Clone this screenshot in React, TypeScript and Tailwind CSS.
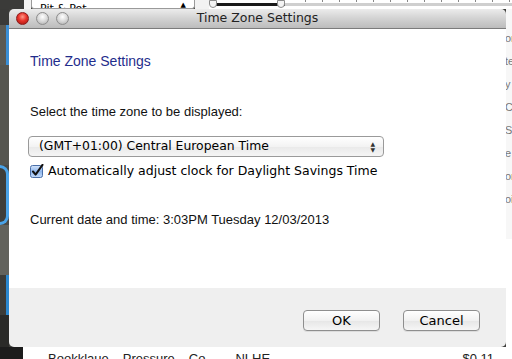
import React from 'react';

const lucida = { fontFamily: '"DejaVu Sans", "Liberation Sans", sans-serif' };
const helv = { fontFamily: '"Liberation Sans", Arial, sans-serif' };

const rightFragments = ['on', 'te', 'y', 'C', 'S', 'e', 'or', 'oi'];

const TrafficLight: React.FC<{ color: 'red' | 'grey' }> = ({ color }) => (
  <div
    className={
      color === 'red'
        ? 'w-[13px] h-[13px] rounded-full border border-[#8a1a1a] bg-[radial-gradient(circle_at_50%_35%,#ff9a8a_0%,#e8332a_45%,#a01510_100%)]'
        : 'w-[13px] h-[13px] rounded-full border border-[#8d8d8d] bg-[radial-gradient(circle_at_50%_35%,#ffffff_0%,#d9d9d9_50%,#a9a9a9_100%)]'
    }
  />
);

const CheckBox: React.FC = () => (
  <svg width="14" height="14" viewBox="0 0 14 14" className="shrink-0">
    <defs>
      <linearGradient id="cb" x1="0" y1="0" x2="0" y2="1">
        <stop offset="0" stopColor="#d6e6fb" />
        <stop offset="0.5" stopColor="#8fb6ec" />
        <stop offset="1" stopColor="#c4dcfb" />
      </linearGradient>
    </defs>
    <rect x="0.5" y="1.5" width="12" height="12" rx="2" fill="url(#cb)" stroke="#4a6fa8" />
    <path d="M3 7.5 L5.6 10.6 L12.5 0.8" fill="none" stroke="#111" strokeWidth="2" strokeLinecap="round" strokeLinejoin="round" />
  </svg>
);

const MacButton: React.FC<{ label: string }> = ({ label }) => (
  <button
    className="w-[77px] h-[21px] rounded-[4px] border border-[#8e8e8e] bg-[linear-gradient(#ffffff,#f1f1f1_50%,#e6e6e6_51%,#f6f6f6)] text-[13px] leading-none text-black shadow-[0_1px_0_rgba(0,0,0,0.08)]"
    style={lucida}
  >
    {label}
  </button>
);

export default function App() {
  return (
    <div className="w-[512px] h-[359px] overflow-hidden bg-[#3f3f3c] flex flex-col">
      {/* top strip: background app controls */}
      <div className="h-[9px] flex shrink-0">
        <div className="w-[24px] shrink-0 bg-[#3b3b39]" />
        <div className="w-[7px] shrink-0 bg-[#f2f2f2]" />
        <div
          className="w-[164px] shrink-0 h-[9px] border-x border-b border-[#9a9a9a] rounded-b-[3px] bg-white flex items-end justify-between px-[8px] text-[11px] leading-none overflow-hidden"
          style={lucida}
        >
          <span className="translate-y-[6px]">Pit &amp; Pot</span>
          <span className="text-[7px] translate-y-[1px]">▲</span>
        </div>
        <div className="w-[14px] shrink-0 bg-[#f2f2f2]" />
        <div className="flex-1 relative bg-white">
          <div className="absolute left-[2px] top-[3px] w-[74px] h-[3px] bg-[#1a1a1a]" />
          <div className="absolute left-[76px] right-0 top-[3px] h-[3px] bg-[#cfcfcf]" />
          <div className="absolute left-0 top-0 w-[8px] h-[8px] rounded-b-full border border-[#8d8d8d] bg-[#f4f4f4]" />
          <div className="absolute left-[68px] top-0 w-[8px] h-[8px] rounded-b-full border border-[#8d8d8d] bg-[#f4f4f4]" />
          <div className="absolute left-[96px] right-0 top-0 h-[2px] bg-[repeating-linear-gradient(90deg,#888_0px,#888_1px,transparent_1px,transparent_17px)]" />
        </div>
      </div>

      <div className="flex flex-1 min-h-0">
        {/* left strip */}
        <div className="w-[9px] shrink-0 flex flex-col bg-[#4a4a46]">
          <div className="h-[16px] bg-[#3a3a38]" />
          <div className="h-[40px] bg-[#5a5a54] border-r-[3px] border-[#3a8fd6]" />
          <div className="h-[100px] bg-[#55554f]" />
          <div className="h-[60px] bg-[#3e3e3a] rounded-r-full border-y-[3px] border-r-[3px] border-[#4aa3e8]" />
          <div className="h-[50px] bg-[#62625c]" />
          <div className="h-[40px] bg-[#3c3c39] border-r-[3px] border-[#2b88d0]" />
          <div className="flex-1 bg-[#2a2a28]" />
        </div>

        {/* window */}
        <div className="w-[497px] shrink-0 flex flex-col rounded-[5px] overflow-hidden">
          <div className="h-[20px] shrink-0 relative flex items-center px-[7px] gap-[7px] bg-[linear-gradient(#ececec,#d2d2d2_50%,#bcbcbc)] border-b border-[#7b7b7b]">
            <TrafficLight color="red" />
            <TrafficLight color="grey" />
            <TrafficLight color="grey" />
            <div className="absolute inset-0 flex items-center justify-center text-[12.5px] text-[#222]" style={lucida}>
              Time Zone Settings
            </div>
          </div>

          <div className="h-[259px] shrink-0 bg-white flex flex-col pl-[21px] pt-[23px]" style={helv}>
            <div className="text-[14px] leading-[18px] text-[#1f2d8c]">Time Zone Settings</div>
            <div className="mt-[34px] text-[13px] leading-[16px] text-[#111]">Select the time zone to be displayed:</div>
            <div
              className="mt-[16px] ml-[-2px] w-[356px] h-[21px] rounded-[4px] border border-[#9a9a9a] bg-[linear-gradient(#ffffff,#f3f3f3_50%,#e9e9e9_51%,#f5f5f5)] flex items-center justify-between pl-[10px] pr-[8px] text-[12.4px] text-black"
              style={lucida}
            >
              <span>(GMT+01:00) Central European Time</span>
              <span className="flex flex-col items-center text-[6px] leading-[6px] text-[#333]">
                <span>▲</span>
                <span>▼</span>
              </span>
            </div>
            <div className="mt-[6px] flex items-center gap-[4px] text-[12.5px] leading-[16px] text-black" style={lucida}>
              <CheckBox />
              <span>Automatically adjust clock for Daylight Savings Time</span>
            </div>
            <div className="mt-[33px] text-[13px] leading-[16px] text-[#111]">
              Current date and time: 3:03PM Tuesday 12/03/2013
            </div>
          </div>

          <div className="flex-1 bg-[#efefef] flex justify-end items-start pt-[22px] pr-[26px] gap-[23px]">
            <MacButton label="OK" />
            <MacButton label="Cancel" />
          </div>
        </div>

        {/* right strip */}
        <div className="flex-1 min-w-0 overflow-hidden flex flex-col bg-white">
          <div className="h-[230px] bg-[#f7f7f7] pt-[22px] flex flex-col gap-[9px] text-[11px] leading-[14px] text-[#777]" style={helv}>
            {rightFragments.map((t, i) => (
              <span key={i} className="whitespace-nowrap -ml-[1px]">{t}</span>
            ))}
          </div>
        </div>
      </div>

      {/* bottom strip */}
      <div className="h-[12px] shrink-0 flex overflow-hidden">
        <div className="w-[23px] shrink-0 bg-[#1c1c1c]" />
        <div className="flex-1 min-w-0 overflow-hidden bg-white text-[13px] text-[#222]" style={helv}>
          <div className="flex items-start pt-[5px] pl-[25px] pr-[18px] leading-none whitespace-nowrap">
            <span>Bookklaue</span>
            <span className="ml-[14px]">Pressure</span>
            <span className="ml-[14px]">Co</span>
            <span className="ml-[30px]">NLHE</span>
            <span className="ml-auto">$0.11</span>
          </div>
        </div>
      </div>
    </div>
  );
}
